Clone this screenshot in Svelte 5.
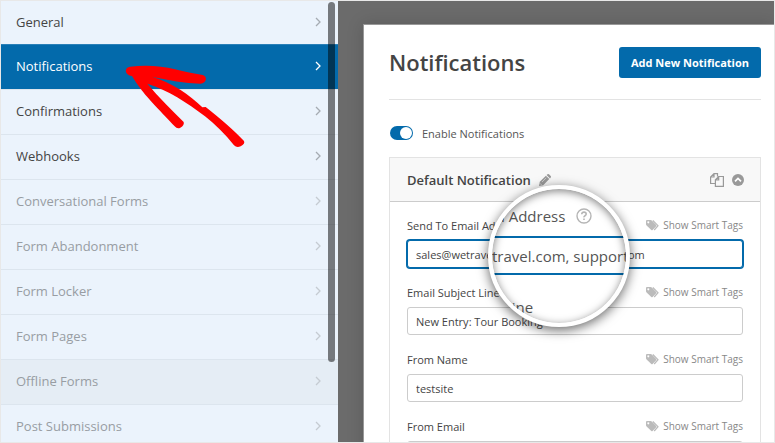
<script>
  const sections = [
    { name: 'General' },
    { name: 'Notifications', active: true },
    { name: 'Confirmations' },
    { name: 'Webhooks' },
    { name: 'Conversational Forms', locked: true },
    { name: 'Form Abandonment', locked: true },
    { name: 'Form Locker', locked: true },
    { name: 'Form Pages', locked: true },
    { name: 'Offline Forms', locked: true, hovered: true },
    { name: 'Post Submissions', locked: true }
  ];

  let enabled = $state(true);
  let fields = $state([
    { id: 'send-to', label: 'Send To Email Address', value: 'sales@wetravel.com, support@wetravel.com', focused: true },
    { id: 'subject', label: 'Email Subject Line', value: 'New Entry: Tour Booking Form' },
    { id: 'from-name', label: 'From Name', value: 'testsite' },
    { id: 'from-email', label: 'From Email', value: '' }
  ]);
</script>

<div class="page">
  <nav class="sidebar" aria-label="Form settings">
    {#each sections as s}
      <a href="#settings" class:active={s.active} class:locked={s.locked} class:hovered={s.hovered}>
        <span>{s.name}</span>
        <svg width="6" height="10" viewBox="0 0 6 10" aria-hidden="true">
          <path d="M1 1l4 4-4 4" fill="none" stroke="currentColor" stroke-width="1.3" />
        </svg>
      </a>
    {/each}
    <div class="scrollbar"></div>
    <svg class="arrow" width="150" height="110" viewBox="0 0 450 330" aria-hidden="true">
      <path fill="#f00" d="M60 50C110 44 155 48 195 58C225 66 250 71 278 75C292 78 292 100 271 101C225 99 175 91 126 80C185 98 240 134 277 172L287 171C330 204 370 240 402 273Q406 282 392 289Q380 294 372 286C345 252 315 223 285 199C230 157 175 121 112 101C145 142 186 180 221 216Q224 226 211 233Q202 238 194 229C160 192 110 142 92 116C82 103 74 92 66 78C52 76 44 66 49 56Q52 51 60 50Z" />
    </svg>
  </nav>

  <main>
    <section class="panel">
      <header class="title">
        <h1>Notifications</h1>
        <button type="button" class="add">Add New Notification</button>
      </header>

      <label class="toggle">
        <input type="checkbox" role="switch" bind:checked={enabled} />
        <span>Enable Notifications</span>
      </label>

      <div class="card">
        <header class="card-head">
          <h2>Default Notification</h2>
          <button type="button" class="icon" aria-label="Rename">
            <svg width="12" height="12" viewBox="0 0 12 12">
              <path fill="currentColor" d="M0 12L.8 7.800L6.900 1.700L10.300 5.100L4.200 11.200ZM7.600 1L8.500.3Q9.300-.3 10 .3L11.700 2Q12.300 2.700 11.700 3.500L11 4.400Z" />
              <path d="M3 8L7.200 3.800M1 9.300L2.700 11" stroke="#f8f8f8" stroke-width=".5" />
            </svg>
          </button>
          <span class="grow"></span>
          <button type="button" class="icon" aria-label="Duplicate">
            <svg width="14" height="14" viewBox="0 0 14 14" fill="none" stroke="currentColor" stroke-width="1.200">
              <path d="M5 10.500H.6V4L4 .6H7.500V3.500M4 .6V4H.6M8.700 3.500H13.400V13.400H5.400V6.800ZM8.700 3.500V6.800H5.400" />
            </svg>
          </button>
          <button type="button" class="icon" aria-label="Collapse">
            <svg width="12" height="12" viewBox="0 0 12 12">
              <circle cx="6" cy="6" r="6" fill="currentColor" />
              <path d="M3 7.400l3-3 3 3" fill="none" stroke="#fff" stroke-width="1.700" />
            </svg>
          </button>
        </header>

        <div class="fields">
          {#each fields as f}
            <div class="field">
              <div class="row">
                <label for={f.id}>{f.label}</label>
                <a href="#tags">
                  <svg width="13" height="11" viewBox="0 0 13 11" aria-hidden="true">
                    <path fill="currentColor" fill-rule="evenodd" d="M0 1Q0 0 1 0H4.500Q5.200 0 5.800.6L10.200 5Q10.800 5.700 10.200 6.300L6.600 10Q6 10.600 5.300 10L.6 5.400Q0 4.800 0 4.200zM2.300 1.300a1 1 0 1 0 .01 0z" />
                    <path fill="none" stroke="currentColor" stroke-width="1.200" d="M6.800.5L12 5.700L8.200 10" />
                  </svg>
                  Show Smart Tags
                </a>
              </div>
              <input id={f.id} type="text" class:focused={f.focused} bind:value={f.value} />
            </div>
          {/each}
        </div>

        <div class="lens" aria-hidden="true">
          <div class="lens-label">
            <span>l Address</span>
            <svg width="16" height="16" viewBox="0 0 16 16" fill="none" stroke="#b5b5b5" stroke-width="1.400">
              <circle cx="8" cy="8" r="7" />
              <path d="M5.700 6.300q.2-2.200 2.300-2.200t2.200 1.900q0 1-1.200 1.700T8 9.400M8 10.600v1.500" stroke-width="1.600" />
            </svg>
          </div>
          <div class="lens-input">travel.com, support@</div>
          <div class="lens-next">Line</div>
        </div>
      </div>
    </section>
  </main>
</div>

<style>
  .page {
    box-sizing: border-box;
    display: flex;
    height: 100vh;
    overflow: hidden;
    border: 1px solid #e8e8e8;
    font-family: 'Open Sans', 'Noto Sans', sans-serif;
    font-size: 13px;
    color: #444;
  }
  .sidebar {
    position: relative;
    flex: 0 0 337px;
    background: #ebf3fc;
    overflow: hidden;
  }
  .sidebar a {
    box-sizing: border-box;
    display: flex;
    align-items: center;
    justify-content: space-between;
    height: 45px;
    padding: 0 17px 2px 15px;
    border-top: 1px solid #dce5ee;
    color: #444;
    text-decoration: none;
  }
  .sidebar a:first-child {
    height: 43px;
    border-top: 0;
  }
  .sidebar a svg {
    color: #a5abb2;
  }
  .sidebar a.active {
    background: #036aab;
    border-color: #2a80b8;
    color: #fff;
  }
  .sidebar a.active svg {
    color: #fff;
  }
  .sidebar a.locked {
    color: #989da3;
  }
  .sidebar a.locked svg {
    color: #c5cbd2;
  }
  .sidebar a.hovered {
    background: #e5edf5;
  }
  .scrollbar {
    position: absolute;
    top: 1px;
    right: 3px;
    width: 7px;
    height: 360px;
    border-radius: 4px;
    background: rgba(0, 0, 0, 0.5);
  }
  .arrow {
    position: absolute;
    left: 109px;
    top: 49px;
  }
  main {
    flex: 1;
    min-width: 0;
    padding: 23px 0 0 25px;
    background: #6b6b6b;
  }
  .panel {
    box-sizing: border-box;
    min-height: 100%;
    padding: 0 13px 0 25px;
    border: 1px solid #999;
    border-width: 1px 0 0 1px;
    background: #fff;
    box-shadow: 0 0 16px rgba(0, 0, 0, 0.15);
  }
  .title {
    display: flex;
    align-items: center;
    justify-content: space-between;
    height: 74px;
    border-bottom: 1px solid #e3e3e3;
  }
  h1 {
    margin: 0;
    font-size: 22px;
    font-weight: 600;
  }
  button {
    font-family: inherit;
    cursor: pointer;
  }
  .add {
    height: 31px;
    padding: 0 12px;
    border: 0;
    border-radius: 3px;
    background: #036aab;
    color: #fff;
    font-size: 11px;
    font-weight: 700;
  }
  .toggle {
    display: flex;
    align-items: center;
    gap: 9px;
    height: 16px;
    margin: 25px 0 16px 1px;
    font-size: 11px;
    color: #555;
  }
  .toggle input {
    appearance: none;
    display: flex;
    width: 23px;
    height: 14px;
    margin: 0;
    padding: 1px;
    box-sizing: border-box;
    border-radius: 7px;
    background: #999;
  }
  .toggle input::before {
    content: '';
    width: 12px;
    height: 12px;
    border-radius: 50%;
    background: #fff;
  }
  .toggle input:checked {
    justify-content: flex-end;
    background: #036aab;
  }
  .card {
    position: relative;
    border: 1px solid #e3e3e3;
  }
  .card-head {
    display: flex;
    align-items: center;
    gap: 8px;
    height: 43px;
    padding: 0 16px 0 17px;
    border-bottom: 1px solid #ccc;
    background: #f8f8f8;
  }
  h2 {
    margin: 0;
    font-size: 13px;
    font-weight: 600;
  }
  .grow {
    flex: 1;
  }
  .icon {
    display: flex;
    padding: 0;
    border: 0;
    background: none;
    color: #999;
  }
  .fields {
    display: flex;
    flex-direction: column;
    gap: 15px;
    padding: 14px 17px;
  }
  .row {
    display: flex;
    justify-content: space-between;
    align-items: center;
    height: 18px;
    margin-bottom: 6px;
    font-size: 11px;
  }
  .row a {
    display: flex;
    align-items: center;
    gap: 4px;
    color: #888;
    font-size: 10px;
    text-decoration: none;
  }
  .row svg {
    color: #bbb;
  }
  .field input {
    display: block;
    box-sizing: border-box;
    width: 100%;
    height: 28px;
    padding: 0 8px;
    border: 1px solid #ccc;
    border-radius: 3px;
    outline: 0;
    background: #fff;
    color: #444;
    font-family: inherit;
    font-size: 11px;
  }
  .field input.focused {
    border-color: #036aab;
    box-shadow: 0 0 0 1px #036aab;
  }
  .lens {
    position: absolute;
    box-sizing: border-box;
    left: 98px;
    top: 27px;
    width: 142px;
    height: 142px;
    border: 4px solid #fff;
    border-radius: 50%;
    overflow: hidden;
    background: #fff;
    box-shadow: 0 3px 12px rgba(0, 0, 0, 0.6);
    color: #555;
    font-size: 15px;
    white-space: nowrap;
  }
  .lens::after {
    content: '';
    position: absolute;
    inset: 0;
    border-radius: 50%;
    box-shadow: inset 0 2px 8px rgba(0, 0, 0, 0.5);
  }
  .lens-label {
    display: flex;
    align-items: center;
    gap: 11px;
    box-sizing: border-box;
    height: 47px;
    padding: 6px 0 0 9px;
  }
  .lens-input {
    display: flex;
    align-items: center;
    height: 35px;
    border: solid #036aab;
    border-width: 2px 0;
  }
  .lens-next {
    padding: 20px 0 0 12px;
    line-height: 24px;
  }
</style>
